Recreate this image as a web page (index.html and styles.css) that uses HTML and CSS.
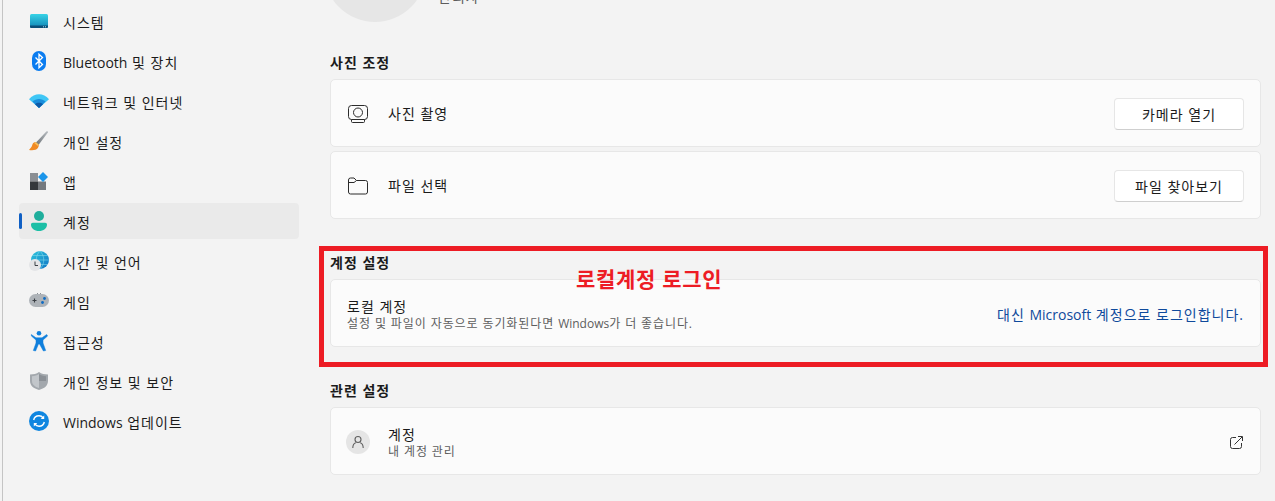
FILE: index.html

```html
<!DOCTYPE html>
<html lang="ko">
  <head>
    <meta charset="UTF-8" />
    <meta name="viewport" content="width=device-width, initial-scale=1.0" />
    <title>계정</title>
    <link rel="stylesheet" href="styles.css">
  </head>
  <body>
    <div class="app">
      <aside class="sidebar">
        <nav class="nav">
          <a class="nav-item">
            <svg class="nav-icon nudge" viewBox="0 0 20 20">
              <defs>
                <linearGradient id="g-sys" x1="0" y1="0" x2="0" y2="1"><stop offset="0" stop-color="#37d3e6"/><stop offset="1" stop-color="#1185b5"/></linearGradient>
              </defs>
              <rect x="1" y="2" width="18" height="14" rx="1.5" fill="url(#g-sys)"/>
              <path d="M1 13.5h18v1a1.5 1.5 0 0 1-1.500 1.500h-15a1.500 1.500 0 0 1-1.500-1.500z" fill="#0b4f78"/>
              <rect x="14" y="14.300" width="1" height="1" fill="#9fdcec"/>
              <rect x="16" y="14.300" width="1" height="1" fill="#9fdcec"/>
            </svg>
            <span class="nav-label">시스템</span>
          </a>
          <a class="nav-item">
            <svg class="nav-icon nudge" viewBox="0 1 20 20">
              <rect x="3" y="0" width="14" height="20" rx="7" fill="#0a7cf0"/>
              <path d="M6.500 6.500l7 7-3.500 3.300V3.200l3.500 3.300-7 7" fill="none" stroke="#fff" stroke-width="1.300"/>
            </svg>
            <span class="nav-label"><span class="lat">Bluetooth</span> 및 장치</span>
          </a>
          <a class="nav-item">
            <svg class="nav-icon nudge" viewBox="0 0 20 20">
              <path d="M0 7.200C5.500 .6 14.500 .6 20 7.200L10 16z" fill="#3fc6f5"/>
              <path d="M3.500 9.500C7 6 13 6 16.500 9.500L10 16z" fill="#1a8ddb"/>
              <path d="M6 12.200c2.300-1.800 5.700-1.800 8 0L10 16z" fill="#0d5aa8"/>
            </svg>
            <span class="nav-label">네트워크 및 인터넷</span>
          </a>
          <a class="nav-item">
            <svg class="nav-icon" viewBox="0 0 20 20">
              <defs>
                <linearGradient id="g-brush" x1="0" y1="1" x2="1" y2="0"><stop offset="0" stop-color="#6d7378"/><stop offset="1" stop-color="#b9bec2"/></linearGradient>
              </defs>
              <path d="M7 11.500L17.600 .3c.8-.5 1.800.3 1.300 1.200L9.500 14z" fill="url(#g-brush)"/>
              <path d="M6.500 11c-2.500.4-3 2-3.500 3.800-.4 1.500-1.600 2.500-3 4.200 3.500.7 7.500.3 9-2.200.8-1.300.9-2.400.6-3.300z" fill="#f08a24"/>
              <path d="M6.500 11l3.100 2.500-.8 1.500-3.600-3.100z" fill="#f6c05a"/>
            </svg>
            <span class="nav-label">개인 설정</span>
          </a>
          <a class="nav-item">
            <svg class="nav-icon nudge" viewBox="0 0 20 20">
              <rect x="1" y="1" width="8" height="8.500" fill="#8b8f94"/>
              <rect x="1" y="9.500" width="8" height="8.500" fill="#33373b"/>
              <rect x="9" y="9.500" width="8" height="8.500" fill="#74797e"/>
              <path d="M14 0l5 5-5 5-5-5z" fill="#1b95ea"/>
            </svg>
            <span class="nav-label">앱</span>
          </a>
          <a class="nav-item active">
            <svg class="nav-icon" viewBox="0 0 20 20">
              <circle cx="10" cy="5" r="5" fill="#1fae9c"/>
              <path d="M2 13.500c0-1 .8-1.800 1.800-1.800h12.400c1 0 1.800.8 1.800 1.800 0 4-3.500 6.500-8 6.500s-8-2.500-8-6.500z" fill="#1cbfa6"/>
            </svg>
            <span class="nav-label">계정</span>
          </a>
          <a class="nav-item">
            <svg class="nav-icon" viewBox="0 0 20 20">
              <defs>
                <linearGradient id="g-globe" x1="0" y1="0" x2="1" y2="1"><stop offset="0" stop-color="#2fc6dc"/><stop offset="1" stop-color="#0f73c4"/></linearGradient>
              </defs>
              <circle cx="11" cy="9" r="9" fill="url(#g-globe)"/>
              <path d="M2 9h18M11 0c-5 5-5 13 0 18M11 0c5 5 5 13 0 18M3.500 4.500h15M3.500 13.500h15" fill="none" stroke="#8fe0ee" stroke-width=".5"/>
              <circle cx="6" cy="14" r="6" fill="#e4e5e7"/>
              <path d="M6 10.500V14.500h3" fill="none" stroke="#3d4247" stroke-width="1"/>
            </svg>
            <span class="nav-label">시간 및 언어</span>
          </a>
          <a class="nav-item">
            <svg class="nav-icon nudge" viewBox="0 0 20 20">
              <rect x="0" y="2" width="20" height="13" rx="6.500" fill="#aeb3b8"/>
              <path d="M3.500 8.500h4M5.500 6.500v4" stroke="#3a3f44" stroke-width="1.100"/>
              <circle cx="13.500" cy="10.500" r="1.400" fill="#0f6cc4"/>
              <circle cx="15.500" cy="6.500" r="1.400" fill="#0f6cc4"/>
              <rect x="8" y="1" width="1" height="1" fill="#8a8f94"/>
              <rect x="11" y="1" width="1" height="1" fill="#8a8f94"/>
            </svg>
            <span class="nav-label">게임</span>
          </a>
          <a class="nav-item">
            <svg class="nav-icon" viewBox="0 0 20 20">
              <circle cx="10" cy="2.300" r="2.300" fill="#0f7fdc"/>
              <path d="M2.300 3.500L7 6.800h6l4.700-3.300 .9 1.500-4.600 4v3l2.700 7.500-2.300.5L10.500 13h-1l-2.900 7-2.300-.5L7 12V9L2.400 5z" fill="#0f7fdc" stroke="#0f7fdc" stroke-width=".5" stroke-linejoin="round"/>
            </svg>
            <span class="nav-label">접근성</span>
          </a>
          <a class="nav-item">
            <svg class="nav-icon nudge" viewBox="0 0 20 20">
              <path d="M10 0c2.500 1.800 5.500 2.500 9 2.500v6.500c0 4.500-3.500 7.500-9 9-5.500-1.500-9-4.500-9-9V2.500C4.500 2.500 7.500 1.800 10 0z" fill="#a3a8ad"/>
              <path d="M10 2v14c-4-1.200-7-3.500-7-7V4.300c2.700-.2 5-.9 7-2.300z" fill="#c2c6ca"/>
              <path d="M10 2c2 1.400 4.300 2.100 7 2.300V9H10z" fill="#8b9096"/>
            </svg>
            <span class="nav-label">개인 정보 및 보안</span>
          </a>
          <a class="nav-item">
            <svg class="nav-icon" viewBox="0 0 20 20">
              <circle cx="10" cy="10" r="10" fill="#0f86e0"/>
              <path d="M4.700 9c.5-2.700 2.700-4.200 5.300-4.200 1.700 0 3.200.8 4.100 2.100M15.300 11c-.5 2.700-2.700 4.200-5.300 4.200-1.700 0-3.200-.8-4.100-2.100" fill="none" stroke="#fff" stroke-width="1.400"/>
              <path d="M15.200 4.600v3.500h-3.500zM4.800 15.400v-3.500h3.500z" fill="#fff"/>
            </svg>
            <span class="nav-label"><span class="lat">Windows</span> 업데이트</span>
          </a>
        </nav>
      </aside>

      <main class="content">
        <div class="profile">
          <div class="avatar"></div>
          <p class="profile-role">관리자</p>
        </div>

        <h2 class="section-title">사진 조정</h2>
        <div class="card-list">
          <div class="card">
            <svg class="card-icon" viewBox="0 0 20 20">
              <rect x=".5" y="1.500" width="19" height="14" rx="3" fill="none" stroke="#2b2b2b"/>
              <circle cx="10" cy="8.500" r="4.500" fill="none" stroke="#2b2b2b"/>
              <path d="M3.500 15.500v2a1 1 0 0 0 1 1h11a1 1 0 0 0 1-1v-2" fill="none" stroke="#2b2b2b"/>
            </svg>
            <span class="card-text single">사진 촬영</span>
            <button class="btn">카메라 열기</button>
          </div>
          <div class="card">
            <svg class="card-icon" viewBox="0 0 20 20">
              <path d="M.5 4a2 2 0 0 1 2-2h3.500l2.500 2.500h9a2 2 0 0 1 2 2V16a2 2 0 0 1-2 2h-15a2 2 0 0 1-2-2z" fill="none" stroke="#2b2b2b"/>
              <path d="M.5 6.500h5.500l2.500-2" fill="none" stroke="#2b2b2b"/>
            </svg>
            <span class="card-text single">파일 선택</span>
            <button class="btn">파일 찾아보기</button>
          </div>
        </div>

        <h2 class="section-title">계정 설정</h2>
        <div class="card no-icon">
          <div class="card-text">
            <p class="card-title">로컬 계정</p>
            <p class="card-sub">설정 및 파일이 자동으로 동기화된다면 <span class="lat">Windows</span>가 더 좋습니다.</p>
          </div>
          <a class="card-link">대신 <span class="lat">Microsoft</span> 계정으로 로그인합니다.</a>
        </div>

        <h2 class="section-title">관련 설정</h2>
        <div class="card with-badge">
          <span class="user-badge">
            <svg viewBox="0 0 12 12" width="12" height="12">
              <circle cx="6" cy="3.500" r="3" fill="none" stroke="#5f5f5f" stroke-width="1.100"/>
              <path d="M.8 12c0-3 1.800-4.800 3-5.200M11.200 12c0-3-1.800-4.800-3-5.200" fill="none" stroke="#5f5f5f" stroke-width="1.100"/>
            </svg>
          </span>
          <div class="card-text">
            <p class="card-title">계정</p>
            <p class="card-sub">내 계정 관리</p>
          </div>
          <svg class="ext-icon" viewBox="0 0 13 13">
            <path d="M6 1.500H2.500a2 2 0 0 0-2 2v7a2 2 0 0 0 2 2h7a2 2 0 0 0 2-2V7" fill="none" stroke="#333"/>
            <path d="M4.500 8.500L12 1M8 .5h4.500V5" fill="none" stroke="#333"/>
          </svg>
        </div>
      </main>

      <div class="callout">
        <span class="callout-label">로컬계정 로그인</span>
      </div>
    </div>
  </body>
</html>
```

FILE: styles.css

```css
* {
  box-sizing: border-box;
  margin: 0;
  padding: 0;
}

body {
  background-color: #f3f3f3;
  color: #1b1b1b;
  font-family: "Open Sans", "Noto Sans CJK KR", sans-serif;
  font-size: 14px;
  letter-spacing: 1px;
}

svg {
  overflow: visible;
  flex-shrink: 0;
}

/* latin words keep their normal width, only hangul runs wider */
.lat {
  letter-spacing: 0;
}

.app {
  position: relative;
  display: flex;
  height: 501px;
  overflow: hidden;
}

/* sidebar */
.sidebar {
  width: 300px;
  margin-left: 2px;
  border-left: 1px solid #c4c4c4;
  padding: 3px 0 0 16px;
}

.nav {
  display: flex;
  flex-direction: column;
  gap: 4px;
}

.nav-item {
  position: relative;
  display: flex;
  align-items: center;
  gap: 14px;
  width: 280px;
  height: 36px;
  padding-left: 10px;
  border-radius: 4px;
}

.nav-icon {
  width: 20px;
  height: 20px;
}

.nav-label {
  margin-top: 2px;
}

.nudge {
  margin-top: 2px;
}

.nav-item.active {
  background-color: #eaeaea;
}

.nav-item.active::before {
  content: "";
  position: absolute;
  left: 0;
  top: 10px;
  width: 3px;
  height: 16px;
  border-radius: 2px;
  background-color: #0f5fc4;
}

/* main column */
.content {
  width: 931px;
  margin-left: 28px;
}

.profile {
  display: flex;
  align-items: flex-end;
  gap: 12px;
  height: 102px;
  margin: -80px 0 0 -6px;
}

.avatar {
  width: 102px;
  height: 102px;
  border-radius: 50%;
  background-color: #e6e6e6;
}

.profile-role {
  margin-bottom: 16px;
  color: #5d5d5d;
}

.section-title {
  height: 20px;
  margin-top: 33px;
  font-size: 14px;
  font-weight: 700;
  line-height: 22px;
}

.profile + .section-title {
  margin-top: 30px;
}

.card-list {
  display: flex;
  flex-direction: column;
  gap: 4px;
  margin-top: 7px;
}

.card {
  display: flex;
  align-items: center;
  height: 68px;
  margin-top: 7px;
  padding: 2px 16px 0 17px;
  background-color: #fbfbfb;
  border: 1px solid #e7e7e7;
  border-radius: 5px;
}

.card-list .card {
  margin-top: 0;
}

.card-icon {
  width: 20px;
  height: 20px;
  margin-right: 20px;
}

.card-text {
  flex: 1;
}

.card-text.single {
  margin-bottom: 2px;
}

.card-title {
  margin-top: 2px;
  line-height: 18px;
}

.card-sub {
  color: #5d5d5d;
  font-size: 12px;
  letter-spacing: 0.9px;
  line-height: 16px;
}

.card-sub .lat {
  letter-spacing: 0;
}

.no-icon {
  padding-left: 16px;
}

.btn {
  width: 130px;
  height: 32px;
  background-color: #fff;
  border: 1px solid #e6e6e6;
  border-bottom-color: #cfcfcf;
  border-radius: 4px;
  color: #1b1b1b;
  font-family: inherit;
  font-size: 14px;
  letter-spacing: inherit;
}

.card-link {
  color: #0f4a9c;
}

.with-badge {
  padding-left: 15px;
}

.user-badge {
  display: flex;
  align-items: center;
  justify-content: center;
  width: 24px;
  height: 24px;
  margin-right: 18px;
  border-radius: 50%;
  background-color: #e5e5e5;
}

.ext-icon {
  width: 13px;
  height: 13px;
  margin-right: 1px;
}

/* red annotation drawn over the screenshot */
.callout {
  position: absolute;
  left: 319px;
  top: 246px;
  width: 949px;
  height: 121px;
  border: 5px solid #ed1c24;
}

.callout-label {
  position: absolute;
  left: 252px;
  top: 14px;
  color: #ed1c24;
  font-size: 21px;
  font-weight: 700;
  letter-spacing: 0.7px;
  line-height: 28px;
  white-space: nowrap;
}
```
